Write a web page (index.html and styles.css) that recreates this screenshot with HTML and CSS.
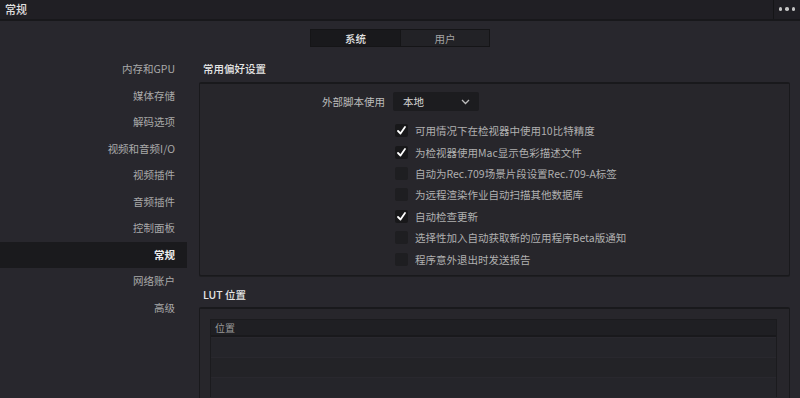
FILE: index.html
```html
<!DOCTYPE html>
<html lang="zh-CN">
<head>
<meta charset="utf-8">
<title>常规</title>
<link rel="stylesheet" href="styles.css">
</head>
<body>
<div class="app">
  <header class="titlebar">
    <div class="title">常规</div>
    <div class="more"><span class="dot"></span><span class="dot"></span><span class="dot"></span></div>
  </header>
  <div class="tabs">
    <div class="tab active">系统</div>
    <div class="tab">用户</div>
  </div>
  <div class="main">
    <nav class="sidebar">
      <div class="nav-item">内存和GPU</div>
      <div class="nav-item">媒体存储</div>
      <div class="nav-item">解码选项</div>
      <div class="nav-item">视频和音频I/O</div>
      <div class="nav-item">视频插件</div>
      <div class="nav-item">音频插件</div>
      <div class="nav-item">控制面板</div>
      <div class="nav-item selected">常规</div>
      <div class="nav-item">网络账户</div>
      <div class="nav-item">高级</div>
    </nav>
    <section class="content">
      <div class="section-title">常用偏好设置</div>
      <div class="panel prefs">
        <div class="field-row">
          <div class="field-label">外部脚本使用</div>
          <div class="dropdown"><span>本地</span>
            <svg class="chev" width="9" height="6" viewBox="0 0 9 6"><polyline points="1,1 4.5,4.5 8,1" fill="none" stroke="#bdbdbd" stroke-width="1.3"/></svg>
          </div>
        </div>
        <div class="checks">
          <div class="check-row"><span class="cb on"><svg width="11" height="11" viewBox="0 0 11 11"><polyline points="2,6 4.5,8.5 9,2" fill="none" stroke="#ffffff" stroke-width="1.8" stroke-linecap="round" stroke-linejoin="round"/></svg></span><span class="cl">可用情况下在检视器中使用10比特精度</span></div>
          <div class="check-row"><span class="cb on"><svg width="11" height="11" viewBox="0 0 11 11"><polyline points="2,6 4.5,8.5 9,2" fill="none" stroke="#ffffff" stroke-width="1.8" stroke-linecap="round" stroke-linejoin="round"/></svg></span><span class="cl">为检视器使用Mac显示色彩描述文件</span></div>
          <div class="check-row"><span class="cb"></span><span class="cl">自动为Rec.709场景片段设置Rec.709-A标签</span></div>
          <div class="check-row"><span class="cb"></span><span class="cl">为远程渲染作业自动扫描其他数据库</span></div>
          <div class="check-row"><span class="cb on"><svg width="11" height="11" viewBox="0 0 11 11"><polyline points="2,6 4.5,8.5 9,2" fill="none" stroke="#ffffff" stroke-width="1.8" stroke-linecap="round" stroke-linejoin="round"/></svg></span><span class="cl">自动检查更新</span></div>
          <div class="check-row"><span class="cb"></span><span class="cl">选择性加入自动获取新的应用程序Beta版通知</span></div>
          <div class="check-row"><span class="cb"></span><span class="cl">程序意外退出时发送报告</span></div>
        </div>
      </div>
      <div class="section-title lut-title">LUT 位置</div>
      <div class="panel lut">
        <div class="table">
          <div class="thead">位置</div>
          <div class="trow"></div>
          <div class="trow alt"></div>
          <div class="trow"></div>
        </div>
      </div>
    </section>
  </div>
</div>
</body>
</html>
```

FILE: styles.css
```css
* { box-sizing: border-box; }
html, body { margin: 0; padding: 0; }
body {
  width: 800px;
  height: 398px;
  overflow: hidden;
  background: #28272d;
  font-family: "Noto Sans CJK SC", "Noto Sans", sans-serif;
  color: #b3b3b3;
}
.app { display: flex; flex-direction: column; height: 398px; }

.titlebar {
  height: 21px;
  display: flex;
  justify-content: space-between;
  align-items: stretch;
  background: #201f24;
  border-bottom: 2px solid #18181b;
  flex: none;
}
.title {
  padding-left: 5px;
  font-size: 11px;
  line-height: 19px;
  font-weight: 500;
  color: #e0e0e0;
}
.more {
  width: 27px;
  border-left: 1px solid #151517;
  display: flex;
  align-items: center;
  justify-content: center;
  gap: 3px;
  padding-bottom: 1px;
}
.dot { width: 3.5px; height: 3.5px; border-radius: 50%; background: #c4c4c4; }

.tabs {
  display: flex;
  justify-content: center;
  margin-top: 8px;
  flex: none;
}
.tab {
  width: 90px;
  height: 18px;
  font-size: 10.5px;
  line-height: 17px;
  text-align: center;
  background: #222226;
  color: #a5a5a5;
  border: 1px solid #151517;
}
.tab.active {
  background: #19191c;
  color: #e2e2e2;
  font-weight: 500;
  border-right: none;
}

.main {
  display: flex;
  margin-top: 9px;
  flex: 1;
  min-height: 0;
}
.sidebar {
  width: 187px;
  flex: none;
  display: flex;
  flex-direction: column;
}
.nav-item {
  height: 26.5px;
  line-height: 26px;
  text-align: right;
  padding-right: 12px;
  font-size: 10.5px;
  color: #a9a9a9;
}
.nav-item.selected {
  background: #1a1a1d;
  color: #ececec;
  font-weight: 700;
}

.content {
  flex: 1;
  padding-left: 12px;
  padding-right: 10px;
}
.section-title {
  height: 26px;
  line-height: 26px;
  padding-left: 4px;
  font-size: 10.5px;
  font-weight: 500;
  color: #e6e6e6;
}
.lut-title {
  margin-top: 6px;
  height: 25px;
  line-height: 26px;
}
.panel {
  background: #27262b;
  border: 1px solid #19191c;
  border-top-width: 2px;
  border-radius: 2px;
  box-shadow: 0 1px 0 #1e1e21;
}
.prefs {
  padding: 8px 0 5px 0;
  height: 194px;
}
.field-row {
  display: grid;
  grid-template-columns: 185px 86px;
  column-gap: 8px;
  align-items: center;
  height: 19px;
}
.field-label {
  text-align: right;
  font-size: 10.5px;
  color: #bdbdbd;
}
.dropdown {
  height: 19px;
  background: #1c1c1f;
  border-radius: 2px;
  display: flex;
  align-items: center;
  justify-content: space-between;
  padding: 0 9px 0 10px;
  font-size: 10.5px;
  color: #d4d4d4;
}
.checks {
  margin-top: 9px;
  padding-left: 195px;
}
.check-row {
  height: 21.4px;
  display: flex;
  align-items: center;
  gap: 7px;
}
.cb {
  width: 13px;
  height: 13px;
  background: #1e1e21;
  border-radius: 2px;
  display: flex;
  align-items: center;
  justify-content: center;
  flex: none;
}
.cb.on { background: #18181a; }
.cl {
  font-size: 10.5px;
  color: #b0b0b0;
}

.lut {
  height: 110px;
  padding: 10px 12px 0 10px;
  border-bottom: none;
}
.table {
  border: 1px solid #1b1b1e;
  border-bottom: none;
}
.thead {
  height: 17px;
  line-height: 16px;
  background: #1f1f23;
  border-bottom: 2px solid #19191c;
  padding-left: 4px;
  font-size: 10px;
  color: #999;
}
.trow {
  height: 20px;
  background: #25252a;
  border-top: 1px solid #29282e;
}
.trow.alt { background: #232327; }
```
